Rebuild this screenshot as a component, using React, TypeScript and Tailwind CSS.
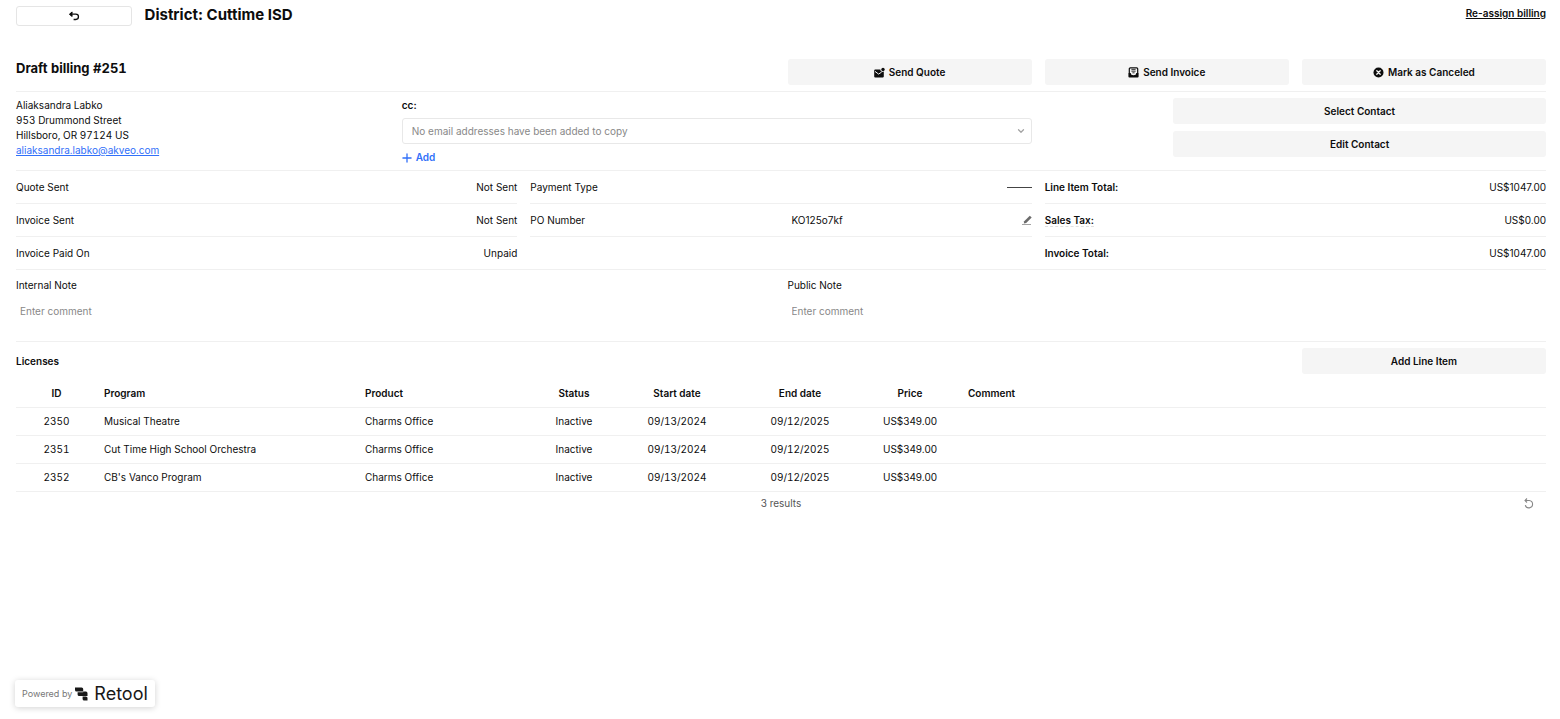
import type { ReactNode } from 'react'
import { ChevronDown, Plus } from 'lucide-react'

interface License {
  id:        number
  program:   string
  product:   string
  status:    string
  startDate: string
  endDate:   string
  price:     string
  comment:   string
}

const LICENSES: License[] = [
  {
    id:        2350,
    program:   'Musical Theatre',
    product:   'Charms Office',
    status:    'Inactive',
    startDate: '09/13/2024',
    endDate:   '09/12/2025',
    price:     'US$349.00',
    comment:   '',
  },
  {
    id:        2351,
    program:   'Cut Time High School Orchestra',
    product:   'Charms Office',
    status:    'Inactive',
    startDate: '09/13/2024',
    endDate:   '09/12/2025',
    price:     'US$349.00',
    comment:   '',
  },
  {
    id:        2352,
    program:   "CB's Vanco Program",
    product:   'Charms Office',
    status:    'Inactive',
    startDate: '09/13/2024',
    endDate:   '09/12/2025',
    price:     'US$349.00',
    comment:   '',
  },
]

// ── Icons ──────────────────────────────────────────────────────────

function BackIcon() {
  return (
    <svg aria-hidden="true" width="12" height="12" viewBox="0 0 12 12" fill="none" stroke="currentColor" strokeWidth="1.3">
      <path d="M4.200 2.200 2 4.200l2.200 2M2.400 4.200h5.400a2.600 2.600 0 0 1 0 5.300H5.600" />
      <path d="M4.400 1.400v5.600L1.200 4.200Z" fill="currentColor" stroke="none" />
    </svg>
  )
}

function QuoteIcon() {
  return (
    <svg aria-hidden="true" width="11" height="11" viewBox="0 0 11 11">
      <path d="M1.200 2.400h5.200a2.300 2.300 0 0 0 3.400 2.200v5a.8.8 0 0 1-.8.800H1.200a1 1 0 0 1-1-1V3.400a1 1 0 0 1 1-1Z" fill="currentColor" />
      <circle cx="9" cy="2.500" r="1.700" fill="currentColor" />
      <path d="m1 4.400 3.600 2.700 3-2" fill="none" stroke="#f5f5f5" strokeWidth="1" />
    </svg>
  )
}

function InvoiceIcon() {
  return (
    <svg aria-hidden="true" width="11" height="11" viewBox="0 0 11 11">
      <path d="M.4 6h2.400a2.700 2.200 0 0 0 5.400 0h2.400v3.600a1 1 0 0 1-1 1H1.400a1 1 0 0 1-1-1Z" fill="currentColor" />
      <path d="M1.300 6V1.800a1 1 0 0 1 1-1h6.400a1 1 0 0 1 1 1V6" fill="none" stroke="currentColor" strokeWidth="1.200" />
      <path d="M3.400 2.600h4.200M3.400 4.200h4.200M4.400 5.800h2.200" stroke="currentColor" strokeWidth="0.8" />
    </svg>
  )
}

function CancelIcon() {
  return (
    <svg aria-hidden="true" width="11" height="11" viewBox="0 0 11 11">
      <circle cx="5.5" cy="5.5" r="5" fill="currentColor" />
      <path d="m3.8 3.8 3.4 3.4M7.2 3.8 3.8 7.2" stroke="#f5f5f5" strokeWidth="1.3" strokeLinecap="round" />
    </svg>
  )
}

function EditIcon() {
  return (
    <svg aria-hidden="true" width="10" height="11" viewBox="0 0 10 11">
      <path d="m2.200 6.200 5.600-5.400 1.900 1.800L4.200 8.100l-2.400.400Z" fill="#6b6b6b" />
      <path d="M0 9.500h9" stroke="#a3a3a3" />
    </svg>
  )
}

function RefreshIcon() {
  return (
    <svg aria-hidden="true" width="10" height="11" viewBox="0 0 10 11" fill="none" stroke="currentColor" strokeWidth="1.1">
      <path d="M1 2.500h4.200a3.700 3.700 0 1 1-3.900 4.600M3 .5l-2 2 2 2" />
    </svg>
  )
}

function RetoolMark() {
  return (
    <svg aria-hidden="true" width="13" height="14" viewBox="0 0 13 14" fill="#181818">
      <path d="M0 .5h6.600A1.600 1.600 0 0 1 8.200 2.100v2.500H1.600A1.600 1.600 0 0 1 0 3Z" />
      <path d="M8.200 4.600h2.700a1.600 1.600 0 0 1 1.600 1.600v2.900H4.200a1.600 1.600 0 0 1-1.600-1.600V5.200h5.600Z" />
      <path d="M7.600 9.500h3.300a1.600 1.600 0 0 1 1.600 1.600v2.400H9.200a1.600 1.600 0 0 1-1.600-1.600Z" />
    </svg>
  )
}

// ── Shared pieces ──────────────────────────────────────────────────

function GrayButton({ icon, children }: { icon?: ReactNode; children: ReactNode }) {
  return (
    <button
      type="button"
      className="flex h-[26px] w-full items-center justify-center gap-1 rounded-[3px] bg-[#f5f5f5] font-semibold hover:bg-neutral-200"
    >
      {icon}
      {children}
    </button>
  )
}

function Row({ label, children }: { label: ReactNode; children?: ReactNode }) {
  return (
    <div className="flex h-[33px] items-center justify-between border-b border-[#f0f0f0]">
      <dt>{label}</dt>
      <dd>{children}</dd>
    </div>
  )
}

function NoteField({ id, label }: { id: string; label: string }) {
  return (
    <div className="col-span-6">
      <label htmlFor={id} className="block">{label}</label>
      <input
        id={id}
        type="text"
        placeholder="Enter comment"
        className="mt-[5px] block h-[26px] w-full px-1 outline-none placeholder:text-[#888888]"
      />
    </div>
  )
}

function LicensesTable() {
  return (
    <table className="w-full table-fixed border-collapse text-center">
      <thead>
        <tr className="h-[27px] border-b border-[#f0f0f0]">
          <th className="w-[81px] font-semibold">ID</th>
          <th className="w-[261px] px-[7px] text-left font-semibold">Program</th>
          <th className="w-[177px] px-[7px] text-left font-semibold">Product</th>
          <th className="w-[78px] font-semibold">Status</th>
          <th className="w-[128px] font-semibold">Start date</th>
          <th className="w-[118px] font-semibold">End date</th>
          <th className="w-[102px] font-semibold">Price</th>
          <th className="px-[7px] text-left font-semibold">Comment</th>
        </tr>
      </thead>
      <tbody>
        {LICENSES.map((l) => (
          <tr key={l.id} className="h-[28px] border-b border-[#f0f0f0]">
            <td className="tabular-nums">{l.id}</td>
            <td className="px-[7px] text-left">{l.program}</td>
            <td className="px-[7px] text-left">{l.product}</td>
            <td>{l.status}</td>
            <td className="tabular-nums">{l.startDate}</td>
            <td className="tabular-nums">{l.endDate}</td>
            <td>{l.price}</td>
            <td className="px-[7px] text-left">{l.comment}</td>
          </tr>
        ))}
      </tbody>
    </table>
  )
}

export default function App() {
  return (
    <div className="flex min-h-screen flex-col bg-white pr-[14px] pl-4 font-[Inter,sans-serif] text-[10px] leading-[15px] text-[#0d0d0d]">

      {/* Top bar */}
      <header className="grid grid-cols-12 gap-x-[13px] pt-[6px]">
        <button
          type="button"
          aria-label="Back"
          className="flex h-5 items-center justify-center rounded-[3px] border border-[#e5e5e5] bg-white"
        >
          <BackIcon />
        </button>
        <h1 className="col-span-8 text-[15px] leading-[18px] font-bold">District: Cuttime ISD</h1>
        <a href="#reassign" className="col-span-3 justify-self-end leading-[14px] font-semibold underline">
          Re-assign billing
        </a>
      </header>

      <main>
        {/* Draft title and actions */}
        <section className="mt-[33px] grid h-[33px] grid-cols-6 gap-x-[13px] border-b border-[#f0f0f0]">
          <h2 className="col-span-3 text-[13px] leading-[18px] font-bold tabular-nums">Draft billing #251</h2>
          <GrayButton icon={<QuoteIcon />}>Send Quote</GrayButton>
          <GrayButton icon={<InvoiceIcon />}>Send Invoice</GrayButton>
          <GrayButton icon={<CancelIcon />}>Mark as Canceled</GrayButton>
        </section>

        {/* Contact */}
        <section className="grid h-[79px] grid-cols-12 gap-x-[13px] border-b border-[#f0f0f0] pt-[6px]">
          <address className="col-span-3 tabular-nums not-italic">
            Aliaksandra Labko<br />
            953 Drummond Street<br />
            Hillsboro, OR 97124 US<br />
            <a href="mailto:aliaksandra.labko@akveo.com" className="text-[#3170f9] underline">
              aliaksandra.labko@akveo.com
            </a>
          </address>

          <div className="col-span-5">
            <label htmlFor="cc" className="block font-semibold">cc:</label>
            <div className="relative mt-[5px]">
              <select
                id="cc"
                className="block h-[26px] w-full appearance-none rounded-[3px] border border-[#e8e8e8] bg-white px-[9px] text-[#888888]"
              >
                <option>No email addresses have been added to copy</option>
              </select>
              <ChevronDown
                aria-hidden="true"
                size={10}
                strokeWidth={3}
                className="pointer-events-none absolute top-2 right-[6px] text-[#a3a3a3]"
              />
            </div>
            <button type="button" className="mt-[6px] flex items-center gap-[2px] font-semibold text-[#3170f9]">
              <Plus aria-hidden="true" size={14} strokeWidth={2.25} className="-ml-[2px]" />
              Add
            </button>
          </div>

          <div className="col-span-3 col-start-10 flex flex-col gap-[7px]">
            <GrayButton>Select Contact</GrayButton>
            <GrayButton>Edit Contact</GrayButton>
          </div>
        </section>

        {/* Billing details */}
        <section className="grid grid-cols-3 gap-x-[13px] border-b border-[#f0f0f0]">
          <dl className="-mb-px">
            <Row label="Quote Sent">Not Sent</Row>
            <Row label="Invoice Sent">Not Sent</Row>
            <Row label="Invoice Paid On">Unpaid</Row>
          </dl>
          <dl>
            <Row label="Payment Type">
              <span className="block w-[25px] border-t border-[#444444]" />
            </Row>
            <div className="grid h-[33px] grid-cols-2 items-center gap-x-[13px] border-b border-[#f0f0f0]">
              <dt>PO Number</dt>
              <dd className="flex items-center justify-between pl-1">
                KO125o7kf
                <button type="button" aria-label="Edit PO number">
                  <EditIcon />
                </button>
              </dd>
            </div>
          </dl>
          <dl className="-mb-px">
            <Row label={<span className="font-semibold">Line Item Total:</span>}>US$1047.00</Row>
            <Row label={<span className="border-b border-dashed border-[#e0e0e0] font-semibold">Sales Tax:</span>}>
              US$0.00
            </Row>
            <Row label={<span className="font-semibold">Invoice Total:</span>}>US$1047.00</Row>
          </dl>
        </section>

        {/* Notes */}
        <section className="grid h-[72px] grid-cols-12 gap-x-[13px] border-b border-[#f0f0f0] pt-[8px]">
          <NoteField id="internal-note" label="Internal Note" />
          <NoteField id="public-note" label="Public Note" />
        </section>

        {/* Licenses */}
        <section>
          <div className="grid grid-cols-6 items-center gap-x-[13px] pt-[6px] pb-[6px]">
            <h3 className="col-span-5 font-semibold">Licenses</h3>
            <GrayButton>Add Line Item</GrayButton>
          </div>
          <LicensesTable />
          <div className="grid grid-cols-3 items-center pt-1">
            <span className="col-start-2 text-center text-[#555555]">3 results</span>
            <button type="button" aria-label="Refresh" className="mr-3 justify-self-end text-[#888888]">
              <RefreshIcon />
            </button>
          </div>
        </section>
      </main>

      <footer className="mt-auto pb-3">
        <a
          href="#retool"
          className="-ml-px inline-flex h-[27px] items-center gap-[3px] rounded-[3px] bg-white px-[7px] text-[#777777] shadow-[0_1px_6px_rgba(0,0,0,0.18)]"
        >
          <span className="text-[9px]">Powered by</span>
          <RetoolMark />
          <span className="ml-[3px] text-[18px] leading-6 text-[#181818]">Retool</span>
        </a>
      </footer>
    </div>
  )
}
